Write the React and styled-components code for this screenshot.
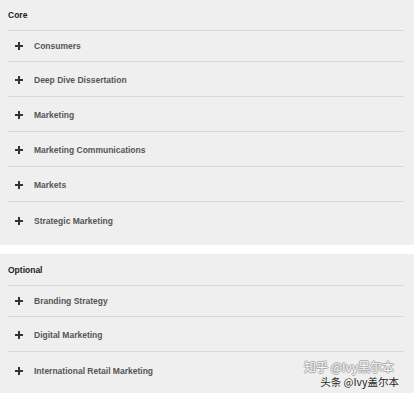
import React from "react";
import styled, { createGlobalStyle } from "styled-components";

const core = [
  "Consumers",
  "Deep Dive Dissertation",
  "Marketing",
  "Marketing Communications",
  "Markets",
  "Strategic Marketing",
];

const optional = ["Branding Strategy", "Digital Marketing", "International Retail Marketing"];

const GlobalStyle = createGlobalStyle`
  html, body {
    margin: 0;
    background: #ffffff;
  }
  body {
    font-family: "Liberation Sans", Arial, sans-serif;
  }
`;

const Page = styled.div`
  width: 416px;
  height: 393px;
  overflow: hidden;
  display: flex;
  flex-direction: column;
  gap: 9px;
`;

const Panel = styled.section`
  position: relative;
  width: 414px;
  background: #efefef;
  padding-bottom: ${p => p.$bottom}px;
  flex: ${p => (p.$grow ? 1 : "none")};
`;

const Heading = styled.div`
  height: ${p => p.$h}px;
  margin: 0 10px 0 8px;
  border-bottom: 1px solid #d9d9d9;
  display: flex;
  align-items: center;
  font-size: 8.5px;
  font-weight: bold;
  color: #222;
`;

const List = styled.ul`
  list-style: none;
  margin: 0 10px 0 8px;
  padding: 0;
`;

const Row = styled.li`
  height: 35px;
  box-sizing: border-box;
  padding: 2px 0 0 7px;
  display: flex;
  align-items: center;
  gap: 11px;
  border-bottom: 1px solid #d9d9d9;
  font-size: 8.5px;
  font-weight: bold;
  color: #555;

  &:first-child {
    height: 31px;
    padding-top: 0;
  }
  &:last-child {
    border-bottom: none;
  }
`;

const Plus = () => (
  <svg width="8" height="8" viewBox="0 0 8 8">
    <path d="M4 0V8M0 4H8" stroke="#333" strokeWidth="2" />
  </svg>
);

const Mark = styled.div`
  position: absolute;
  right: ${p => p.$right}px;
  bottom: ${p => p.$bottom}px;
  font-family: "Noto Sans CJK SC", sans-serif;
  font-size: ${p => p.$size}px;
  line-height: 1;
  color: ${p => p.$color};
  white-space: nowrap;
  text-shadow: ${p => p.$shadow};
`;

const Section = ({ title, items, headH, bottom, grow, children }) => (
  <Panel $bottom={bottom} $grow={grow}>
    <Heading $h={headH}>{title}</Heading>
    <List>
      {items.map(name => (
        <Row key={name}>
          <Plus />
          {name}
        </Row>
      ))}
    </List>
    {children}
  </Panel>
);

export default function App() {
  return (
    <Page>
      <GlobalStyle />
      <Section title="Core" items={core} headH={30} bottom={8} />
      <Section title="Optional" items={optional} headH={31} bottom={0} grow>
        <Mark
          $right={20}
          $bottom={20}
          $size={12}
          $color="#f6f6f6"
          $shadow="1px 0 0 #aaa, -1px 0 0 #aaa, 0 1px 0 #aaa, 0 -1px 0 #aaa"
        >
          知乎 @Ivy黑尔本
        </Mark>
        <Mark $right={15} $bottom={6} $size={10.5} $color="#222" $shadow="0 0 1px #fff">
          头条 @Ivy盖尔本
        </Mark>
      </Section>
    </Page>
  );
}
